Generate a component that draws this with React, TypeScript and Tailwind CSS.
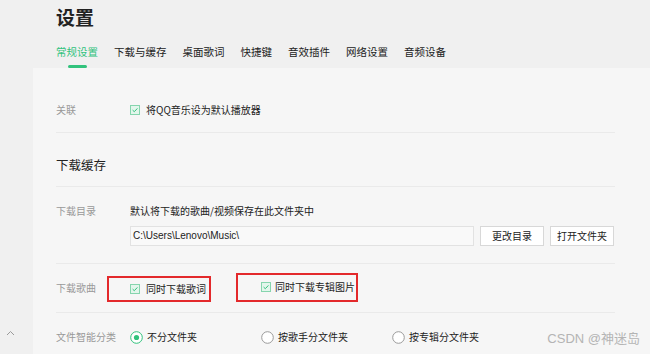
import React from 'react';

const tabs = ['常规设置', '下载与缓存', '桌面歌词', '快捷键', '音效插件', '网络设置', '音频设备'];

const CheckBox = () => (
  <svg width="10" height="10" viewBox="0 0 10 10" className="shrink-0">
    <rect x="0.5" y="0.5" width="9" height="9" fill="#e3f6ec" stroke="#86d5ae" />
    <path d="M2.6 5.1 L4.3 6.7 L7.4 3.4" fill="none" stroke="#31c27c" strokeWidth="1" />
  </svg>
);

const Radio = ({ checked }: { checked?: boolean }) => (
  <svg width="13" height="13" viewBox="0 0 13 13" className="shrink-0">
    <circle cx="6.5" cy="6.5" r="5.8" fill="#fff" stroke={checked ? '#31c27c' : '#9a9a9a'} strokeWidth="1" />
    {checked && <circle cx="6.5" cy="6.5" r="2.6" fill="#31c27c" />}
  </svg>
);

const App: React.FC = () => {
  return (
    <div
      className="relative w-[650px] h-[354px] overflow-hidden bg-[#f0f0f0] flex flex-col text-[#333]"
      style={{ fontFamily: '"Noto Sans CJK SC", "Noto Sans", sans-serif' }}
    >
      {/* Header */}
      <div className="h-[68px] shrink-0 pl-[56px] pt-[6px]">
        <h1 className="text-[19px] leading-[22px] font-bold text-[#222]">设置</h1>
        <div className="flex gap-[16px] mt-[17px]">
          {tabs.map((t, i) => (
            <div key={t} className="flex flex-col">
              <span className={`text-[10.5px] leading-[14px] ${i === 0 ? 'text-[#31c27c]' : 'text-[#222]'}`}>{t}</span>
              {i === 0 && <div className="mt-[6px] h-[3px] w-[19px] mx-auto bg-[#31c27c] rounded-full" />}
            </div>
          ))}
        </div>
      </div>

      <div className="flex flex-1">
        {/* Sidebar */}
        <div className="w-[33px] shrink-0 flex flex-col justify-end items-center pb-[18px]">
          <svg width="9" height="6" viewBox="0 0 9 6" className="mr-[12px]">
            <path d="M1 5 L4.5 1.5 L8 5" fill="none" stroke="#9a9a9a" strokeWidth="1" />
          </svg>
        </div>

        {/* Main */}
        <div className="flex-1 bg-[#f6f6f6] pl-[23px] pr-[35px] text-[10px] leading-[14px]">
          <div className="h-[65px] pt-[35px] flex border-b border-[#eaeaea]">
            <span className="w-[74px] text-[#999]">关联</span>
            <div className="flex items-center gap-[6px] h-[14px]">
              <CheckBox />
              <span className="text-[#222]">将QQ音乐设为默认播放器</span>
            </div>
          </div>

          <div className="h-[54px] pt-[25px] border-b border-[#eaeaea]">
            <span className="text-[12.5px] text-[#222]">下载缓存</span>
          </div>

          <div className="h-[77px] pt-[17px] border-b border-[#eaeaea]">
            <div className="flex">
              <span className="w-[74px] text-[#999]">下载目录</span>
              <span className="text-[#222]">默认将下载的歌曲/视频保存在此文件夹中</span>
            </div>
            <div className="flex mt-[8px] ml-[74px] h-[20px] gap-[6px]">
              <div className="w-[344px] border border-[#e2e2e2] bg-[#f9f9f9] pl-[2px] text-[#222] leading-[18px]" style={{ fontFamily: '"Liberation Sans", sans-serif' }}>
                C:\Users\Lenovo\Music\
              </div>
              <button className="w-[64px] border border-[#d8d8d8] bg-white leading-[18px] text-[#222]">更改目录</button>
              <button className="w-[64px] border border-[#d8d8d8] bg-white leading-[18px] text-[#222]">打开文件夹</button>
            </div>
          </div>

          <div className="h-[49px] flex items-center border-b border-[#eaeaea]">
            <span className="w-[51px] text-[#999]">下载歌曲</span>
            <div className="flex items-center gap-[6px] h-[26px] w-[104px] border-2 border-[#e3292b] pl-[21px] mt-[2px]">
              <CheckBox />
              <span className="text-[#222]">同时下载歌词</span>
            </div>
            <div className="flex items-center gap-[4px] h-[29px] w-[122px] border-2 border-[#e3292b] pl-[23px] ml-[25px] -mt-[2px]">
              <CheckBox />
              <span className="text-[#222]">同时下载专辑图片</span>
            </div>
          </div>

          <div className="pt-[17px] flex">
            <span className="w-[74px] text-[#999]">文件智能分类</span>
            {[
              ['不分文件夹', true],
              ['按歌手分文件夹', false],
              ['按专辑分文件夹', false],
            ].map(([label, checked]) => (
              <div key={label as string} className="w-[131px] flex items-center gap-[4px] h-[14px]">
                <Radio checked={checked as boolean} />
                <span className="text-[#222]">{label as string}</span>
              </div>
            ))}
          </div>
        </div>
      </div>

      <div
        className="absolute right-[10px] bottom-[6px] text-[13px] leading-[18px] text-[#b4b4b4]"
        style={{ fontFamily: '"Liberation Sans", "Noto Sans CJK SC", sans-serif' }}
      >
        CSDN @神迷岛
      </div>
    </div>
  );
};

export default App;
